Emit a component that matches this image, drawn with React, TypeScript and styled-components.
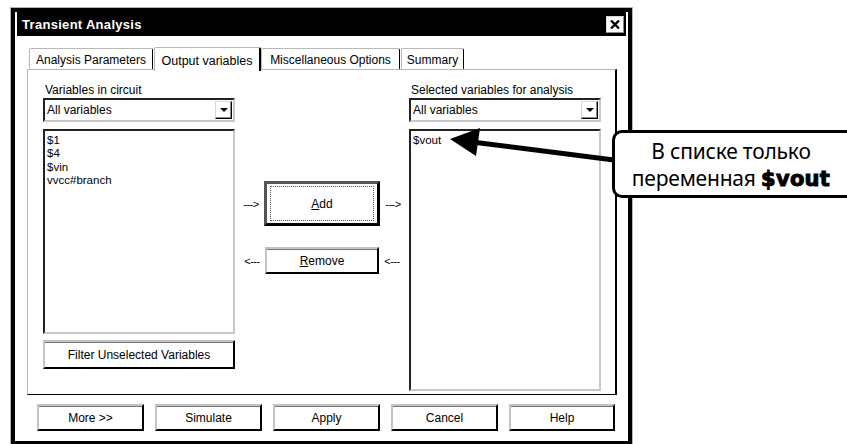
import React from "react";
import styled, { createGlobalStyle } from "styled-components";

const GlobalStyle = createGlobalStyle`
	html, body {
		margin: 0;
		padding: 0;
		background: #fff;
	}
	body {
		font-family: "Liberation Sans", Arial, sans-serif;
		font-size: 12px;
		color: #000;
	}
`;

const Page = styled.div`
	position: relative;
	width: 847px;
	height: 444px;
	overflow: hidden;
	padding: 7px 0 0 10px;
	box-sizing: border-box;
`;

const Dialog = styled.div`
	width: 623px;
	height: 437px;
	box-sizing: border-box;
	border: 1px solid #b4b4b4;
	border-bottom: none;
	background: #fff;
`;

const Frame = styled.div`
	height: 100%;
	box-sizing: border-box;
	border: 4px solid #000;
	border-bottom-width: 3px;
	padding: 0 2px 2px;
	display: flex;
	flex-direction: column;
`;

const TitleBar = styled.div`
	height: 24px;
	background: #000;
	color: #fff;
	display: flex;
	align-items: center;
	justify-content: space-between;
	padding: 0 2px 0 5px;
	font-weight: bold;
	font-size: 13px;
	letter-spacing: 0.3px;
`;

const CloseBtn = styled.div`
	width: 18px;
	height: 17px;
	box-sizing: border-box;
	background: #fff;
	border: 1px solid;
	border-color: #d8d8d8 #888 #888 #d8d8d8;
	display: flex;
	align-items: center;
	justify-content: center;
`;

const Body = styled.div`
	flex: 1;
	padding: 11px 8px 0 10px;
	display: flex;
	flex-direction: column;
`;

const TabRow = styled.div`
	display: flex;
	align-items: flex-end;
	height: 24px;
	padding-left: 2px;
	position: relative;
	z-index: 1;
	margin-bottom: -2px;
`;

const Tab = styled.div<{ $active?: boolean; $w: number }>`
	box-sizing: border-box;
	width: ${(p) => p.$w}px;
	height: ${(p) => (p.$active ? "24px" : "21px")};
	padding-top: 2px;
	margin: ${(p) => (p.$active ? "0" : "0 1px 2px 0")};
	background: #fff;
	border: 1px solid;
	border-bottom: none;
	border-color: #b8b8b8 #000 transparent #b8b8b8;
	border-right-width: ${(p) => (p.$active ? "2px" : "1px")};
	border-radius: 2px 2px 0 0;
	font-size: ${(p) => (p.$active ? "12.5px" : "12px")};
	display: flex;
	align-items: center;
	justify-content: center;
	white-space: nowrap;
	position: relative;
	z-index: ${(p) => (p.$active ? 2 : 1)};
`;

const Panel = styled.div`
	width: 590px;
	height: 326px;
	box-sizing: border-box;
	border: 1px solid;
	border-color: #b8b8b8 #000 #000 #b8b8b8;
	border-right-width: 2px;
	display: grid;
	grid-template-columns: 192px 174px 192px;
	padding: 13px 0 0 15px;
	align-items: start;
`;

const Column = styled.div`
	display: flex;
	flex-direction: column;
`;

const Label = styled.div`
	height: 14px;
	line-height: 14px;
	padding-left: 2px;
	margin-bottom: 1px;
	white-space: nowrap;
`;

const Combo = styled.div`
	height: 24px;
	box-sizing: border-box;
	border: 2px solid;
	border-color: #222 #c8c8c8 #c8c8c8 #222;
	display: flex;
	align-items: center;
	justify-content: space-between;
	padding-left: 2px;
`;

const DropBtn = styled.div`
	width: 17px;
	height: 18px;
	box-sizing: border-box;
	border: 1px solid;
	border-color: #d8d8d8 #000 #000 #d8d8d8;
	box-shadow: inset -1px -1px 0 #888;
	display: flex;
	align-items: center;
	justify-content: center;
	margin-right: 1px;
	&::after {
		content: "";
		border-left: 4px solid transparent;
		border-right: 4px solid transparent;
		border-top: 4px solid #000;
	}
`;

const ListBox = styled.div<{ $h: number }>`
	margin-top: 7px;
	height: ${(p) => p.$h}px;
	box-sizing: border-box;
	border: 2px solid;
	border-color: #222 #c8c8c8 #c8c8c8 #222;
	padding: 3px 3px 0 2px;
	font-size: 11.5px;
	line-height: 13.3px;
`;

const Button = styled.div<{ $w: number; $h: number }>`
	width: ${(p) => p.$w}px;
	height: ${(p) => p.$h}px;
	box-sizing: border-box;
	border: 2px solid;
	border-color: #c4c4c4 #000 #000 #c4c4c4;
	box-shadow: inset 0 1px 0 #777;
	background: #fff;
	display: flex;
	align-items: center;
	justify-content: center;
	white-space: nowrap;
`;

const DefaultButton = styled(Button)`
	border: 3px solid #000;
	border-color: #555 #000 #000 #555;
	box-shadow: none;
	padding: 3px;
`;

const Focus = styled.div`
	width: 100%;
	height: 100%;
	border: 1px dotted #555;
	display: flex;
	align-items: center;
	justify-content: center;
`;

const Middle = styled.div`
	display: flex;
	flex-direction: column;
	padding-top: 98px;
	gap: 21px;
`;

const MoveRow = styled.div`
	display: flex;
	align-items: center;
	justify-content: center;
	gap: 3px;
`;

const Dashes = styled.span`
	width: 20px;
	font-size: 11px;
	text-align: center;
	letter-spacing: -0.5px;
`;

const FilterButton = styled(Button)`
	margin-top: 6px;
`;

const ButtonRow = styled.div`
	display: flex;
	gap: 11px;
	padding: 9px 0 0 10px;
`;

const Callout = styled.div`
	position: absolute;
	left: 612px;
	top: 130px;
	width: 246px;
	height: 68px;
	box-sizing: border-box;
	border: 3px solid #000;
	border-radius: 10px;
	background: #fff;
	font-family: "Noto Sans", "DejaVu Sans", sans-serif;
	font-size: 21px;
	line-height: 27px;
	text-align: center;
	padding-top: 5px;
	padding-right: 8px;
	white-space: nowrap;
	letter-spacing: -0.2px;
`;

const Heavy = styled.b`
	font-family: "DejaVu Sans", sans-serif;
	font-weight: 900;
	font-size: 21px;
	letter-spacing: 0.3px;
	-webkit-text-stroke: 1px #000;
`;

const ArrowSvg = styled.svg`
	position: absolute;
	left: 0;
	top: 0;
	pointer-events: none;
`;

const Underlined = styled.span`
	text-decoration: underline;
`;

export default function App() {
	return (
		<Page>
			<GlobalStyle />
			<Dialog>
				<Frame>
					<TitleBar>
						<span>Transient Analysis</span>
						<CloseBtn>
							<svg width="10" height="9" viewBox="0 0 10 9">
								<path d="M1 0.5 L9 8.5 M9 0.5 L1 8.5" stroke="#000" strokeWidth="2.4" />
							</svg>
						</CloseBtn>
					</TitleBar>
					<Body>
						<TabRow>
							<Tab $w={124}>Analysis Parameters</Tab>
							<Tab $w={107} $active>Output variables</Tab>
							<Tab $w={139}>Miscellaneous Options</Tab>
							<Tab $w={63}>Summary</Tab>
						</TabRow>
						<Panel>
							<Column>
								<Label>Variables in circuit</Label>
								<Combo>
									All variables
									<DropBtn />
								</Combo>
								<ListBox $h={205}>
									<div>$1</div>
									<div>$4</div>
									<div>$vin</div>
									<div>vvcc#branch</div>
								</ListBox>
								<FilterButton $w={192} $h={29}>
									Filter Unselected Variables
								</FilterButton>
							</Column>
							<Middle>
								<MoveRow>
									<Dashes>---&gt;</Dashes>
									<DefaultButton $w={116} $h={45}>
										<Focus>
											<Underlined>A</Underlined>dd
										</Focus>
									</DefaultButton>
									<Dashes>---&gt;</Dashes>
								</MoveRow>
								<MoveRow>
									<Dashes>&lt;---</Dashes>
									<Button $w={114} $h={27}>
										<Underlined>R</Underlined>emove
									</Button>
									<Dashes>&lt;---</Dashes>
								</MoveRow>
							</Middle>
							<Column>
								<Label>Selected variables for analysis</Label>
								<Combo>
									All variables
									<DropBtn />
								</Combo>
								<ListBox $h={262}>
									<div>$vout</div>
								</ListBox>
							</Column>
						</Panel>
						<ButtonRow>
							<Button $w={107} $h={27}>More &gt;&gt;</Button>
							<Button $w={107} $h={27}>Simulate</Button>
							<Button $w={107} $h={27}>Apply</Button>
							<Button $w={107} $h={27}>Cancel</Button>
							<Button $w={106} $h={27}>Help</Button>
						</ButtonRow>
					</Body>
				</Frame>
			</Dialog>
			<ArrowSvg width="847" height="444">
				<line x1="472" y1="142" x2="614" y2="160" stroke="#000" strokeWidth="5" />
				<polygon points="450,139 480,128 476,156" fill="#000" />
			</ArrowSvg>
			<Callout>
				<div>В списке только</div>
				<div>
					переменная <Heavy>$vout</Heavy>
				</div>
			</Callout>
		</Page>
	);
}
